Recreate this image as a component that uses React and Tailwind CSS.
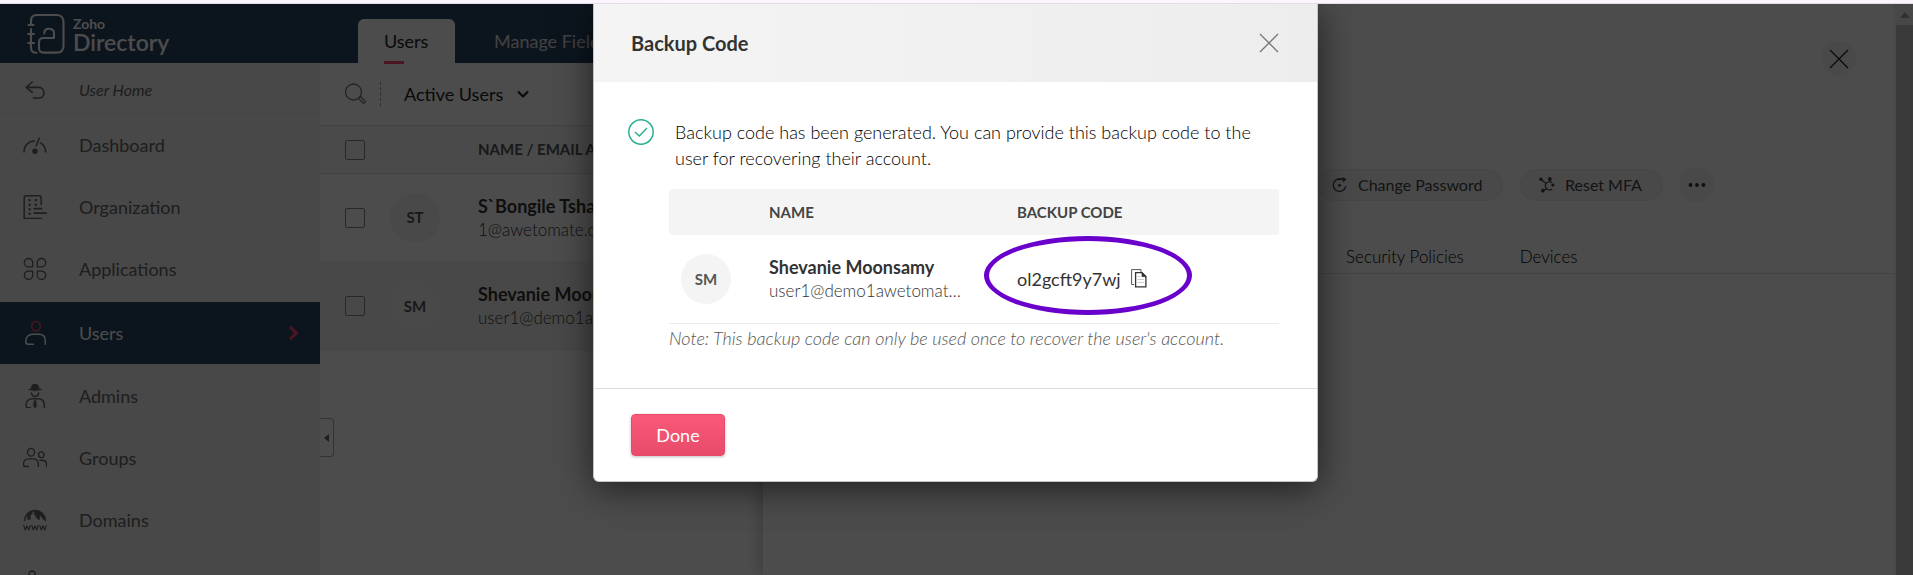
import React from 'react';

const strokeProps = {
  fill: 'none',
  stroke: 'currentColor',
  strokeWidth: 1.3,
  strokeLinecap: 'round',
  strokeLinejoin: 'round',
};

function Icon({ children, size = 24, className = '' }) {
  return (
    <svg width={size} height={size} viewBox="0 0 24 24" className={'shrink-0 ' + className} aria-hidden="true" {...strokeProps}>
      {children}
    </svg>
  );
}

function Logo() {
  return (
    <svg width="40" height="42" viewBox="0 0 40 42" aria-hidden="true" fill="none" stroke="currentColor" strokeWidth="2.1" strokeLinecap="round" strokeLinejoin="round">
      <path d="M1.5 12H6.5M4 12V7.5C4 4 6 2 9.5 2H29.5C34 2 36.5 5 36.5 9V33C36.5 37 34 39.6 29.5 39.6H16.5C13.5 39.6 12 38 12 35V29.5C12 26.5 13.5 25 16.5 25H27V20.5C27 17.5 25 15.800 22 15.800C19 15.800 17.200 17.800 17.200 20.500" />
      <path d="M4 16V34.500C4 38 6 39.800 9.500 39.800M1.200 21H7M1.200 30H7" />
    </svg>
  );
}

const UndoIcon = () => (
  <Icon>
    <g strokeWidth="1.6">
      <path d="M9.300 4L3.200 9.400L9.300 14.400M3.200 9.400H15.500C22.800 9.400 22.800 20 15.500 20H10.500" />
    </g>
  </Icon>
);

const DashboardIcon = () => (
  <Icon>
    <path d="M1 19C1 12.500 5.300 8.400 11.300 8.100M17.500 9.800C20.800 11.700 22.600 15 22.700 19M13.300 12.800L16.200 5.200" strokeWidth="1.500" />
    <circle cx="12" cy="18.300" r="2.700" fill="currentColor" stroke="none" />
  </Icon>
);

const OrgIcon = () => (
  <Icon>
    <path d="M18.200 9.500V3C18.200 1.500 17.200 .8 16 .8H3.600C2 .8 1.200 1.600 1.200 3V23.400H18.500" strokeWidth="1.500" />
    <path d="M11.300 13.700H18.500M11.300 18.200H23" strokeWidth="1.800" />
    <g fill="currentColor" stroke="none">
      <rect x="5.500" y="4" width="2.200" height="2.200" />
      <rect x="11.700" y="4" width="2.200" height="2.200" />
      <rect x="5.500" y="8.600" width="2.200" height="2.200" />
      <rect x="11.700" y="8.600" width="2.200" height="2.200" />
      <rect x="5.500" y="13.200" width="2.200" height="2.200" />
      <rect x="5.500" y="17.700" width="2.200" height="2.200" />
    </g>
  </Icon>
);

const AppsIcon = () => (
  <Icon>
    <path d="M5.500 1.500A4.200 4.200 0 0 1 9.700 5.700V9.900H5.500A4.200 4.200 0 0 1 5.500 1.500ZM18.500 1.500A4.200 4.200 0 0 1 18.500 9.900H14.300V5.700A4.200 4.200 0 0 1 18.500 1.500ZM5.500 14.100H9.700V18.300A4.200 4.200 0 1 1 5.500 14.100ZM14.300 14.100H18.500A4.200 4.200 0 1 1 14.300 18.300Z" />
  </Icon>
);

const UserIcon = () => (
  <Icon>
    <ellipse cx="13" cy="5.300" rx="4.300" ry="4.700" stroke="#f1486b" strokeWidth="1.500" />
    <path d="M10.500 23.200H5.500C3.700 23.200 2.800 22.300 2.800 20.500C2.800 15.500 6 13.200 9.500 13.200H16C20 13.200 22.300 15.800 22.300 19.500V23.200" strokeWidth="1.600" />
  </Icon>
);

const AdminIcon = () => (
  <Icon>
    <path d="M8 5C8 1.500 9.500 0 12 0C14.500 0 16 1.500 16 5L19 5.500L12 6.800L5.500 5.500Z" fill="currentColor" strokeWidth=".6" />
    <path d="M8.300 9C9 11.500 10.500 12.400 12 12.400C13.500 12.400 15.200 11.500 15.800 9M7.500 23.700H5.200C3.600 23.700 3 22.700 3 21.500C3 16.500 6 14.700 9.500 14.700H15C19 14.700 21.300 17 21.300 21V23.700" strokeWidth="1.400" />
    <path d="M11.300 16.500H12.800L13.600 22L12 24L10.500 22Z" fill="currentColor" strokeWidth=".5" />
  </Icon>
);

const GroupIcon = () => (
  <Icon>
    <ellipse cx="8" cy="6.300" rx="3.500" ry="3.900" />
    <ellipse cx="18.300" cy="8.800" rx="2.700" ry="2.900" />
    <path d="M5.500 20.500H2.300C.9 20.500 .4 19.700 .4 18.500C.4 14.500 3 12.900 6 12.900H10C13.500 12.900 15.300 15 15.300 18V20.500M17 14.300H19C22 14.300 23.600 16 23.600 18.500V20.500" strokeWidth="1.400" />
  </Icon>
);

const DomainIcon = () => (
  <Icon>
    <path d="M1.500 12.500C2 6.500 6.500 2.600 12 2.600C17.500 2.600 22 6.500 22.500 12.500" strokeWidth="1.500" />
    <path d="M4 6.500L8 3.500L9.500 5.500L7 7.500L7.500 11L5 11.500ZM11 3H16L20 6L21.500 10L22 12L19.500 10.500L18 7.500L16.500 8L16 12L13.500 9.500L12 7Z" fill="currentColor" strokeWidth=".8" />
    <path d="M.7 17.500L2.200 22L4 17.800L5.800 22L7.300 17.500M8.800 17.500L10.300 22L12 17.800L13.800 22L15.200 17.500M16.800 17.500L18.300 22L20 17.800L21.800 22L23.300 17.500" strokeWidth="1.100" />
  </Icon>
);

const SettingsIcon = () => (
  <Icon>
    <circle cx="9" cy="4" r="3" />
    <path d="M3 14C3 10 6 9 9 9H14" />
  </Icon>
);

const CrossIcon = ({ className }) => (
  <svg width="20" height="20" viewBox="0 0 20 20" className={className} aria-hidden="true" fill="none" stroke="currentColor" strokeWidth="1.300">
    <path d="M1 1L19 19M19 1L1 19" />
  </svg>
);

const navItems = [
  { label: 'Dashboard', icon: DashboardIcon },
  { label: 'Organization', icon: OrgIcon },
  { label: 'Applications', icon: AppsIcon },
  { label: 'Users', icon: UserIcon, active: true },
  { label: 'Admins', icon: AdminIcon },
  { label: 'Groups', icon: GroupIcon },
  { label: 'Domains', icon: DomainIcon },
  { label: 'Settings', icon: SettingsIcon },
];

function Sidebar() {
  return (
    <nav className="w-80 shrink-0 bg-[#f0f0f0] text-[#666]">
      <a href="#home" className="flex h-[51px] items-center gap-8 border-b border-[#e6e6e6] pt-1 pl-[23px] text-base italic">
        <UndoIcon />
        <span>User Home</span>
      </a>
      <ul>
        {navItems.map(({ label, icon: Glyph, active }) => (
          <li key={label}>
            <a
              href={'#' + label.toLowerCase()}
              aria-current={active ? 'page' : undefined}
              className={
                active
                  ? 'mt-0.5 mb-px flex h-[62px] items-center gap-8 bg-[#2b4664] pl-[23px] pr-5 text-lg text-white'
                  : 'flex h-[62px] items-center gap-8 pl-[23px] pr-5 text-lg'
              }
            >
              <Glyph />
              <span className="grow">{label}</span>
              {active && (
                <svg width="12" height="16" viewBox="0 0 12 16" aria-hidden="true" fill="none" stroke="#f1486b" strokeWidth="3.200">
                  <path d="M2 2L8.500 8L2 14" />
                </svg>
              )}
            </a>
          </li>
        ))}
      </ul>
    </nav>
  );
}

const users = [
  { initials: 'ST', name: 'S`Bongile Tshabalala', email: '1@awetomate.com' },
  { initials: 'SM', name: 'Shevanie Moonsamy', email: 'user1@demo1awetomate.com', selected: true },
];

const checkbox = 'block size-5 appearance-none rounded-xs border border-[#888] bg-transparent';

function UserList() {
  return (
    <main className="relative grow bg-white">
      <div className="flex h-[62px] items-center pl-[25px]">
        <svg width="22" height="22" viewBox="0 0 22 22" aria-hidden="true" fill="none" stroke="#777" strokeWidth="1.300">
          <circle cx="8.500" cy="9" r="8" />
          <path d="M13.500 15.500L15.500 13.500L20 18.200C20.500 19.500 19.300 20.500 18 20Z" />
        </svg>
        <span className="ml-[13px] h-6 border-l border-dashed border-[#999]" />
        <button className="ml-[23px] flex items-center gap-[14px] text-lg text-[#222]">
          Active Users
          <svg width="12" height="9" viewBox="0 0 12 9" aria-hidden="true" fill="none" stroke="#222" strokeWidth="2.200">
            <path d="M1 1.500L6 6.500L11 1.500" />
          </svg>
        </button>
      </div>
      <table className="w-full table-fixed border-collapse text-left">
        <colgroup>
          <col className="w-[70px]" />
          <col className="w-[88px]" />
          <col />
        </colgroup>
        <thead>
          <tr className="h-12 border-y border-[#ddd] bg-[#f8f8f8]">
            <th className="pl-[25px]">
              <input type="checkbox" aria-label="Select all users" className={checkbox} />
            </th>
            <th />
            <th className="text-[15px] font-bold text-[#555]">NAME / EMAIL ADDRESS</th>
          </tr>
        </thead>
        <tbody>
          {users.map((u) => (
            <tr key={u.initials} className={u.selected ? 'h-[89px] border-b border-[#eee] bg-[#f2f2f2]' : 'h-[88px] border-b border-[#eee]'}>
              <td className="pl-[25px]">
                <input type="checkbox" aria-label={'Select ' + u.name} className={checkbox} />
              </td>
              <td>
                <span className="flex size-[50px] items-center justify-center rounded-full bg-[#f3f3f3] text-[15px] font-bold text-[#555]">{u.initials}</span>
              </td>
              <td>
                <div className="text-lg leading-6 font-bold text-[#333]">{u.name}</div>
                <div className="text-[17px] leading-6 font-light text-[#333]">{u.email}</div>
              </td>
            </tr>
          ))}
        </tbody>
      </table>
      <button aria-label="Collapse sidebar" className="absolute top-[355px] left-0 flex h-[39px] w-3.5 items-center justify-center rounded-r border border-l-0 border-[#aaa] bg-white">
        <svg width="5" height="8" viewBox="0 0 5 8" aria-hidden="true" fill="#667">
          <path d="M5 0V8L0 4Z" />
        </svg>
      </button>
    </main>
  );
}

const pill = 'flex h-8 items-center gap-2.5 rounded-full border border-[#eaeaea] bg-[#f5f5f5] text-base text-[#444]';

function UserDrawer() {
  return (
    <aside className="absolute inset-y-0 right-0 left-[763px] flex bg-white shadow-[-4px_0_14px_rgba(0,0,0,0.2)]">
      <div className="flex min-w-0 grow flex-col">
        <div className="flex justify-end pt-[37px] pr-[38px]">
          <button aria-label="Close user details" className="flex size-[35px] items-center justify-center rounded-full bg-[#f5f5f5]">
            <CrossIcon className="text-[#222]" />
          </button>
        </div>
        <div className="mt-[91px] flex items-center pl-[555px]">
          <button className={pill + ' w-[185px] pl-[13px]'}>
            <svg width="16" height="16" viewBox="0 0 16 16" aria-hidden="true" fill="none" stroke="currentColor" strokeWidth="1.300" className="shrink-0">
              <path d="M9.500 2.100A6.300 6.300 0 1 0 13.800 9M6 2.600L12 2.200" />
              <path d="M10 0L14.500 2.200L11 5.500Z" fill="currentColor" stroke="none" />
              <circle cx="7.500" cy="8.200" r="1.500" fill="currentColor" stroke="none" />
            </svg>
            <span>Change Password</span>
          </button>
          <button className={pill + ' ml-[17px] w-[143px] pl-[18px]'}>
            <svg width="16" height="16" viewBox="0 0 16 16" aria-hidden="true" fill="none" stroke="currentColor" strokeWidth="1.200" className="shrink-0">
              <path d="M13 5.800A4 4 0 1 0 13 12M2 2.500L7 6.500M10.800 2V5M4 14L7.200 11.800M12.500 8.300H15" />
              <g fill="currentColor" stroke="none">
                <circle cx="1.900" cy="2.300" r="1.800" />
                <circle cx="10.800" cy="2" r="1.900" />
                <circle cx="3.900" cy="13.700" r="1.900" />
                <circle cx="14" cy="8" r="1.500" />
              </g>
            </svg>
            <span>Reset MFA</span>
          </button>
          <button aria-label="More actions" className="ml-4 flex size-[35px] items-center justify-center rounded-full bg-[#f5f5f5]">
            <svg width="18" height="4" viewBox="0 0 18 4" aria-hidden="true" fill="#333">
              <circle cx="2.500" cy="2" r="1.900" />
              <circle cx="9" cy="2" r="1.900" />
              <circle cx="15.500" cy="2" r="1.900" />
            </svg>
          </button>
        </div>
        <div className="mt-[43px] flex h-[29px] gap-14 border-b border-[#e0e0e0] pl-[583px] text-[17px] leading-6 font-light text-black">
          <a href="#policies">Security Policies</a>
          <a href="#devices">Devices</a>
        </div>
      </div>
      <div className="flex w-[19px] flex-col items-stretch bg-[#f1f1f1] pl-0.5">
        <div className="flex h-[21px] items-center justify-center">
          <svg width="10" height="6" viewBox="0 0 10 6" aria-hidden="true" fill="#a3a3a3">
            <path d="M5 0L10 6H0Z" />
          </svg>
        </div>
        <div className="grow bg-[#c1c1c1]" />
      </div>
    </aside>
  );
}

function CopyIcon() {
  return (
    <svg width="16" height="19" viewBox="0 0 16 19" aria-hidden="true" fill="none" stroke="#333">
      <path d="M3 15.500H.6V.6H10V3" strokeWidth="1" stroke="#555" />
      <path d="M4.600 3.600H11L14.900 7.500V17.900H4.600Z" strokeWidth="1.300" />
      <path d="M11 3.600V7.600H14.900Z" fill="#333" strokeWidth=".8" />
      <path d="M6.500 7.500H9.500M6.500 10.500H13M6.500 13.500H13" stroke="#ccc" />
    </svg>
  );
}

function BackupCodeDialog() {
  return (
    <div className="absolute inset-0 z-10 flex items-start justify-center bg-black/70 pr-0.5">
      <section
        role="dialog"
        aria-modal="true"
        aria-labelledby="dialog-title"
        className="w-[725px] overflow-hidden rounded-b-md border border-t-0 border-[#c4c4c4] bg-white shadow-[0_6px_36px_rgba(0,0,0,0.6)]"
      >
        <header className="flex h-[78px] items-center justify-between bg-linear-to-r from-[#f4f4f4] to-[#ededed] pr-[38px] pl-[37px]">
          <h2 id="dialog-title" className="text-xl font-bold text-[#333]">Backup Code</h2>
          <button aria-label="Close">
            <CrossIcon className="text-[#777]" />
          </button>
        </header>
        <div className="pt-[37px] pr-[38px] pl-[34px]">
          <div className="flex gap-[21px]">
            <svg width="26" height="26" viewBox="0 0 26 26" aria-hidden="true" fill="none" stroke="#2bb094" strokeWidth="1.500" className="shrink-0">
              <circle cx="13" cy="13" r="12.200" />
              <path d="M7 13L11.300 17L19 9" />
            </svg>
            <p className="text-lg leading-[26px] font-light text-black">
              Backup code has been generated. You can provide this backup code to the user for recovering their account.
            </p>
          </div>
          <div className="mt-[18px] ml-[41px]">
            <table className="w-full table-fixed border-collapse text-left">
              <colgroup>
                <col className="w-[100px]" />
                <col className="w-[248px]" />
                <col />
              </colgroup>
              <thead>
                <tr className="h-[46px] text-[15px] text-[#444]">
                  <th className="rounded-l bg-[#f4f4f4]" />
                  <th className="bg-[#f4f4f4] font-bold">NAME</th>
                  <th className="rounded-r bg-[#f4f4f4] font-bold">BACKUP CODE</th>
                </tr>
              </thead>
              <tbody>
                <tr className="h-[88px] border-b border-[#ececec]">
                  <td className="pl-3">
                    <span className="flex size-[50px] items-center justify-center rounded-full bg-[#f4f4f4] text-[15px] font-bold text-[#555]">SM</span>
                  </td>
                  <td>
                    <div className="text-lg leading-6 font-bold text-[#333]">Shevanie Moonsamy</div>
                    <div className="w-50 truncate text-[17px] leading-6 font-light text-[#333]">user1@demo1awetomate.com</div>
                  </td>
                  <td className="relative text-lg text-[#333]">
                    <div className="flex items-center gap-2.5">
                      ol2gcft9y7wj
                      <button aria-label="Copy backup code">
                        <CopyIcon />
                      </button>
                    </div>
                    <div className="pointer-events-none absolute top-px left-[-33px] h-[79px] w-52 rounded-[50%] border-[5px] border-[#6a00cc]" />
                  </td>
                </tr>
              </tbody>
            </table>
            <p className="text-lg leading-7 font-light text-[#555] italic">
              Note: This backup code can only be used once to recover the user's account.
            </p>
          </div>
        </div>
        <footer className="mt-9 border-t border-[#ddd] px-[37px] py-[25px]">
          <button className="h-[42px] w-[94px] rounded border border-[#ea4868] bg-linear-to-b from-[#fa5a7a] to-[#e84a69] text-lg text-white shadow-[0_1px_3px_rgba(0,0,0,0.25)]">
            Done
          </button>
        </footer>
      </section>
    </div>
  );
}

export default function App() {
  return (
    <div className="flex h-screen flex-col overflow-hidden font-['Lato',sans-serif]">
      <div className="h-1 shrink-0 border-b border-[#e2dce8] bg-[#fbf5fe]" />
      <div className="relative flex min-h-0 grow flex-col overflow-hidden">
        <header className="flex h-[59px] shrink-0 bg-[#2b4664] text-white">
          <div className="flex w-80 items-center gap-1.5 pl-[27px]">
            <Logo />
            <div className="flex flex-col">
              <span className="text-sm leading-4 font-bold">Zoho</span>
              <span className="text-[23px] leading-5 font-semibold">Directory</span>
            </div>
          </div>
          <div className="flex items-end pl-[38px]">
            <a href="#users" className="relative flex h-11 w-[97px] items-center rounded-t-md bg-white pl-[26px] text-lg text-[#222]">
              Users
              <span className="absolute -bottom-px left-[26px] z-1 h-[3px] w-5 bg-[#f1486b]" />
            </a>
            <a href="#fields" className="flex h-11 items-center pl-[39px] text-lg text-[#ddd]">Manage Fields</a>
          </div>
        </header>
        <div className="flex min-h-0 grow">
          <Sidebar />
          <UserList />
        </div>
        <UserDrawer />
        <BackupCodeDialog />
      </div>
    </div>
  );
}
